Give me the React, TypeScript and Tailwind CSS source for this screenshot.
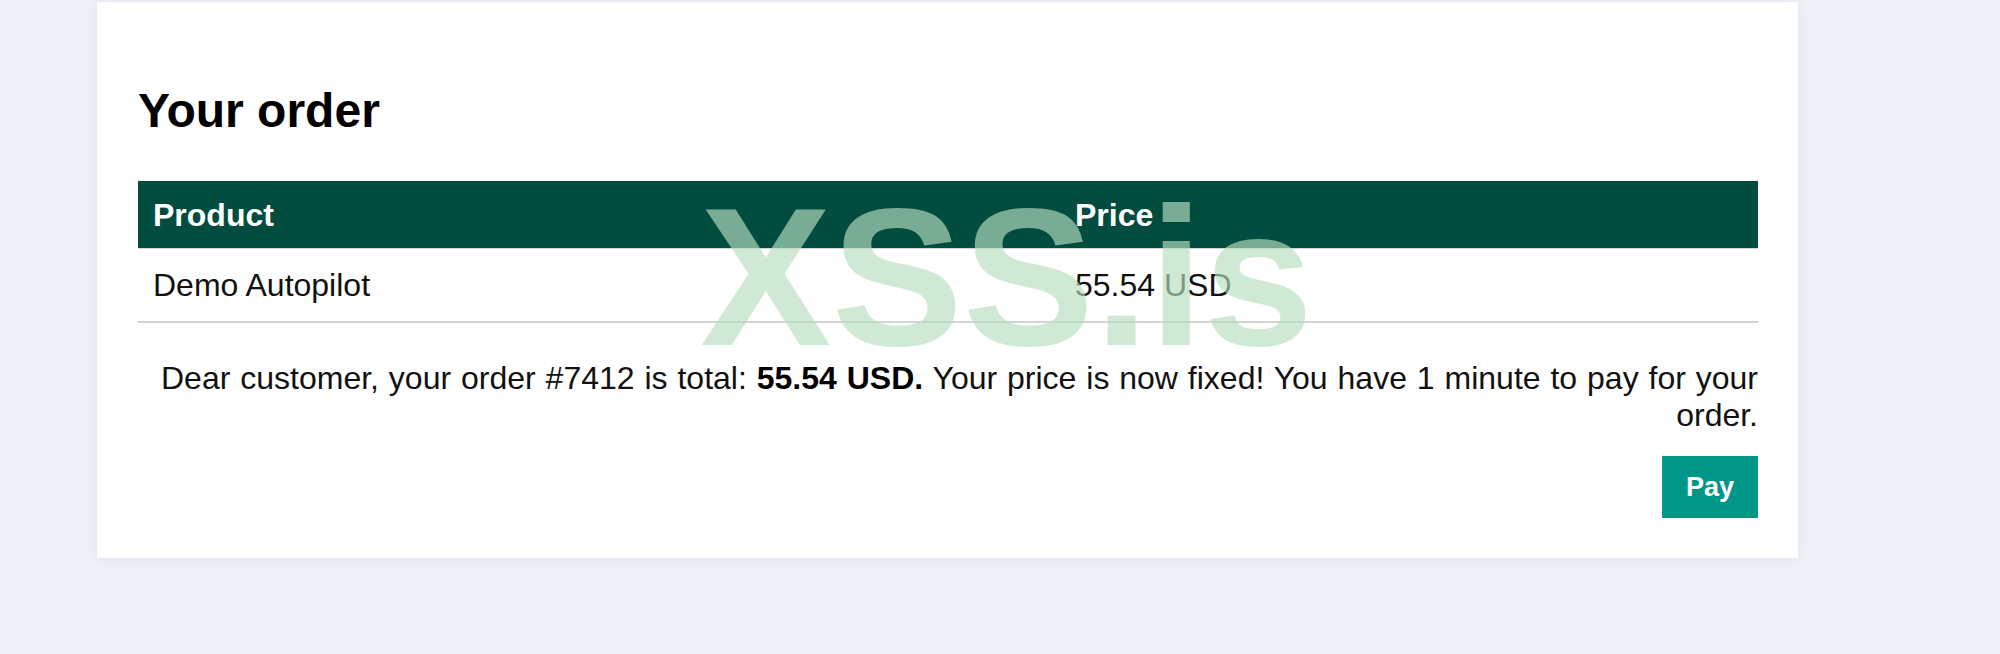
export default function App() {
  return (
    <div className="relative min-h-[654px] bg-[#eef1f6] font-['Liberation_Sans',Arial,sans-serif]">
      <div className="pt-[2px] pl-[97px]">
        <div className="w-[1701px] bg-white pl-[41px] pr-[40px] pt-[81px] pb-[40px] shadow-[0_2px_14px_rgba(30,40,60,0.07)]">
          {/* Title */}
          <h1 className="text-[48px] leading-[56px] font-bold text-black">Your order</h1>

          {/* Order table */}
          <div className="mt-[42px]">
            <div className="flex h-[68px] items-center bg-[#004d40] text-[32px] font-bold text-white border-b border-[#cfd6d4]">
              <div className="w-[922px] px-[15px]">Product</div>
              <div className="flex-1 px-[15px]">Price</div>
            </div>
            <div className="flex h-[74px] items-center border-b-2 border-[#d4d4d4] text-[32px] text-[#111]">
              <div className="w-[922px] px-[15px]">Demo Autopilot</div>
              <div className="flex-1 px-[15px]">55.54 USD</div>
            </div>
          </div>

          {/* Summary */}
          <p className="mt-[37px] text-right text-[32px] leading-[37px] text-[#111] [word-spacing:1px]">
            Dear customer, your order #7412 is total: <b className="font-bold text-black">55.54 USD.</b> Your price is now
            fixed! You have 1 minute to pay for your order.
          </p>

          <div className="mt-[22px] flex justify-end">
            <button className="h-[62px] w-[96px] bg-[#009688] text-[27px] font-bold text-white">Pay</button>
          </div>
        </div>
      </div>

      {/* Watermark */}
      <div className="pointer-events-none absolute left-[700px] top-[179px] text-[197px] leading-[197px] font-bold text-[rgba(183,221,191,0.66)] select-none">
        XSS.is
      </div>
    </div>
  )
}
